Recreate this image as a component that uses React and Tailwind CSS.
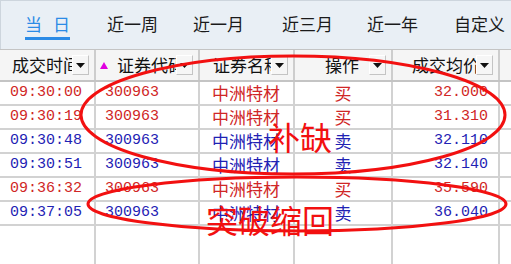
import React from 'react';

const cjk = { fontFamily: '"Noto Sans CJK SC", "Noto Sans", sans-serif' };
const mono = { fontFamily: '"Liberation Mono", "Noto Sans CJK SC", monospace' };

const tabs = [
  { label: '近一周', ml: 'ml-[37px]' },
  { label: '近一月', ml: 'ml-[35px]' },
  { label: '近三月', ml: 'ml-[38px]' },
  { label: '近一年', ml: 'ml-[34px]' },
  { label: '自定义', ml: 'ml-[36px]' },
];

const trades = [
  { time: '09:30:00', code: '300963', name: '中洲特材', side: '买', price: '32.000' },
  { time: '09:30:19', code: '300963', name: '中洲特材', side: '买', price: '31.310' },
  { time: '09:30:48', code: '300963', name: '中洲特材', side: '卖', price: '32.110' },
  { time: '09:30:51', code: '300963', name: '中洲特材', side: '卖', price: '32.140' },
  { time: '09:36:32', code: '300963', name: '中洲特材', side: '买', price: '35.590' },
  { time: '09:37:05', code: '300963', name: '中洲特材', side: '卖', price: '36.040' },
];

const cols = 'grid grid-cols-[96px_104px_95px_98px_107px_1fr]';

const DropBox = () => (
  <div className="w-[17px] h-[20px] mr-[5px] shrink-0 flex items-center justify-center bg-[#f6f6f6] border border-[#c4c4c4] border-t-white border-l-white">
    <svg width="9" height="5" viewBox="0 0 9 5">
      <path d="M0 0 L9 0 L4.5 5 Z" fill="#111" />
    </svg>
  </div>
);

const HeadCell = ({ children, pad, sort }) => (
  <div className="flex items-center h-full border-r-2 border-[#cdcdcd] bg-[#f5f5f5] overflow-hidden">
    {sort && (
      <svg width="8" height="7" viewBox="0 0 8 7" className="ml-[4px] mr-[-12px] shrink-0">
        <path d="M4 0 L8 7 L0 7 Z" fill="#e000e0" />
      </svg>
    )}
    <span className={`flex-1 overflow-hidden whitespace-nowrap text-[17px] leading-[20px] text-[#111] ${pad}`}>
      {children}
    </span>
    <DropBox />
  </div>
);

export default function App() {
  return (
    <div className="w-[511px] h-[264px] relative overflow-hidden bg-white flex flex-col" style={cjk}>
      {/* Tabs */}
      <div className="h-[49px] shrink-0 bg-[#e9eff5] border-l border-t border-[#cdd5dd] flex items-start pt-[13px] text-[17px] leading-[20px] text-[#1a1a1a]">
        <div className="ml-[24px] flex flex-col">
          <div className="flex text-[#2b8be6]">
            <span>当</span>
            <span className="ml-[11px]">日</span>
          </div>
          <div className="mt-[3px] h-[3px] bg-[#2b8be6]" />
        </div>
        {tabs.map((t) => (
          <span key={t.label} className={`${t.ml} whitespace-nowrap`}>{t.label}</span>
        ))}
      </div>

      {/* Header */}
      <div className={`${cols} h-[33px] shrink-0 border-t border-b-2 border-[#c4c4c4] bg-[#f5f5f5]`}>
        <HeadCell pad="pl-[12px]">成交时间</HeadCell>
        <HeadCell pad="pl-[21px]" sort>证券代码</HeadCell>
        <HeadCell pad="pl-[13px]">证券名称</HeadCell>
        <HeadCell pad="pl-[30px]">操作</HeadCell>
        <HeadCell pad="pl-[19px]">成交均价</HeadCell>
        <div className="bg-[#f5f5f5]" />
      </div>

      {/* Rows */}
      {trades.map((r) => {
        const color = r.side === '买' ? 'text-[#d02626]' : 'text-[#1f22b4]';
        return (
          <div key={r.time} className={`${cols} h-[24px] shrink-0 ${color}`}>
            <div className="border-r-2 border-b-2 border-[#d2d2d2] pl-[10px] text-[15px] leading-[22px]" style={mono}>{r.time}</div>
            <div className="border-r-2 border-b-2 border-[#d2d2d2] pl-[9px] text-[15px] leading-[22px]" style={mono}>{r.code}</div>
            <div className="border-r-2 border-b-2 border-[#d2d2d2] pl-[12px] text-[17px] leading-[22px] whitespace-nowrap">{r.name}</div>
            <div className="border-r-2 border-b-2 border-[#d2d2d2] text-center text-[17px] leading-[22px]">{r.side}</div>
            <div className="border-r-2 border-b-2 border-[#d2d2d2] pr-[10px] text-right text-[15px] leading-[22px]" style={mono}>{r.price}</div>
            <div className="border-b-2 border-[#d2d2d2]" />
          </div>
        );
      })}

      {/* Empty area */}
      <div className={`${cols} flex-1`}>
        <div className="border-r-2 border-[#d2d2d2]" />
        <div className="border-r-2 border-[#d2d2d2]" />
        <div className="border-r-2 border-[#d2d2d2]" />
        <div className="border-r-2 border-[#d2d2d2]" />
        <div className="border-r-2 border-[#d2d2d2]" />
        <div />
      </div>

      {/* Hand-drawn annotations */}
      <svg className="absolute inset-0 pointer-events-none" width="511" height="264" viewBox="0 0 511 264">
        <ellipse cx="293" cy="115" rx="212" ry="59" fill="none" stroke="#f21010" strokeWidth="3" />
        <ellipse cx="297" cy="204" rx="209" ry="27" fill="none" stroke="#f21010" strokeWidth="3" />
      </svg>
      <div className="absolute left-[268px] top-[116px] text-[32px] leading-[40px] text-[#f21010] whitespace-nowrap">补缺</div>
      <div className="absolute left-[206px] top-[199px] text-[32px] leading-[40px] text-[#f21010] whitespace-nowrap">突破缩回</div>
    </div>
  );
}
